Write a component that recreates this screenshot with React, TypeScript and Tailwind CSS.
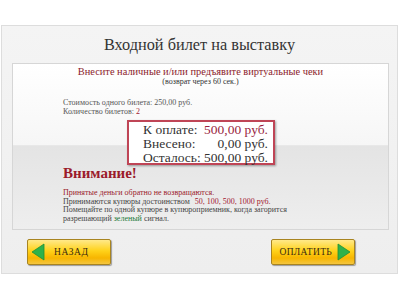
import React from "react";

function Arrow({ dir }: { dir: "left" | "right" }) {
  return (
    <svg width="14" height="18" viewBox="0 0 14 18" className="shrink-0">
      {dir === "left" ? (
        <polygon points="13,1 13,17 1,9" fill="#2fb24a" stroke="#1f8f36" strokeWidth="0.8" />
      ) : (
        <polygon points="1,1 1,17 13,9" fill="#2fb24a" stroke="#1f8f36" strokeWidth="0.8" />
      )}
    </svg>
  );
}

export default function App() {
  return (
    <div className="w-[400px] h-[300px] bg-white pt-[25px] font-['Liberation_Serif',serif]">
      <div className="ml-[1px] w-[397px] h-[249px] border border-[#dddddd] bg-[linear-gradient(#f4f4f4,#eeeeee)] flex flex-col">
        <div className="h-[37px] flex items-center justify-center text-[16.3px] text-[#333333] leading-none pt-[1px]">
          Входной билет на выставку
        </div>
        <div className="ml-[10px] w-[377px] h-[167px] border border-[#d6d6d6] bg-[linear-gradient(#ffffff_0%,#f6f6f6_49%,#e4e4e4_49.5%,#eeeeee_100%)] flex flex-col">
          <div className="text-center text-[10.4px] leading-[11px] text-[#8c1c2c] mt-[2px]">
            Внесите наличные и/или предъявите виртуальные чеки
          </div>
          <div className="text-center text-[8px] leading-[9px] text-[#333333]">
            (возврат через 60 сек.)
          </div>
          <div className="pl-[50px] mt-[12px] text-[8px] leading-[9px] text-[#555555]">
            <div>Стоимость одного билета: 250,00 руб.</div>
            <div>
              Количество билетов: <span className="text-[#a3202f]">2</span>
            </div>
          </div>
          <div className="ml-[114px] mt-[4px] w-[148px] h-[45px] border-2 border-[#bf4556] bg-white shadow-[1px_1px_2px_rgba(0,0,0,0.35)] pl-[14px] pr-[5px] pt-[1px] text-[13.5px] leading-[14px] text-[#333333] whitespace-nowrap">
            <div className="flex justify-between">
              <span>К оплате:</span>
              <span className="text-[#9a1f3f]">500,00 руб.</span>
            </div>
            <div className="flex justify-between">
              <span>Внесено:</span>
              <span>0,00 руб.</span>
            </div>
            <div className="flex justify-between">
              <span>Осталось:</span>
              <span>500,00 руб.</span>
            </div>
          </div>
          <div className="pl-[50px] mt-[0px] text-[15px] leading-[17px] font-bold text-[#9b1b2b]">
            Внимание!
          </div>
          <div className="pl-[50px] mt-[7px] text-[8px] leading-[8.5px] text-[#444444]">
            <div className="text-[#9b1b2b]">Принятые деньги обратно не возвращаются.</div>
            <div>
              Принимаются купюры достоинством{" "}
              <span className="text-[#a3202f] ml-[3px]">50, 100, 500, 1000 руб.</span>
            </div>
            <div>Помещайте по одной купюре в купюроприемник, когда загорится</div>
            <div>
              разрешающий <span className="text-[#1f7a3a]">зеленый</span> сигнал.
            </div>
          </div>
        </div>
        <div className="flex justify-between pl-[25px] pr-[42px] mt-[9px]">
          <div className="w-[84px] h-[26px] rounded-[2px] border border-[#a88420] bg-[linear-gradient(#ffe98a_0%,#ffd21a_45%,#f7b500_75%,#f4c640_100%)] shadow-[1px_1px_1px_rgba(0,0,0,0.35)] flex items-center pl-[3px]">
            <Arrow dir="left" />
            <span className="ml-[9px] text-[9.5px] tracking-[0.6px] text-[#3a2a10]">НАЗАД</span>
          </div>
          <div className="w-[84px] h-[26px] rounded-[2px] border border-[#a88420] bg-[linear-gradient(#ffe98a_0%,#ffd21a_45%,#f7b500_75%,#f4c640_100%)] shadow-[1px_1px_1px_rgba(0,0,0,0.35)] flex items-center justify-end pr-[3px]">
            <span className="mr-[5px] text-[9.5px] tracking-[0.3px] text-[#3a2a10]">ОПЛАТИТЬ</span>
            <Arrow dir="right" />
          </div>
        </div>
      </div>
    </div>
  );
}
